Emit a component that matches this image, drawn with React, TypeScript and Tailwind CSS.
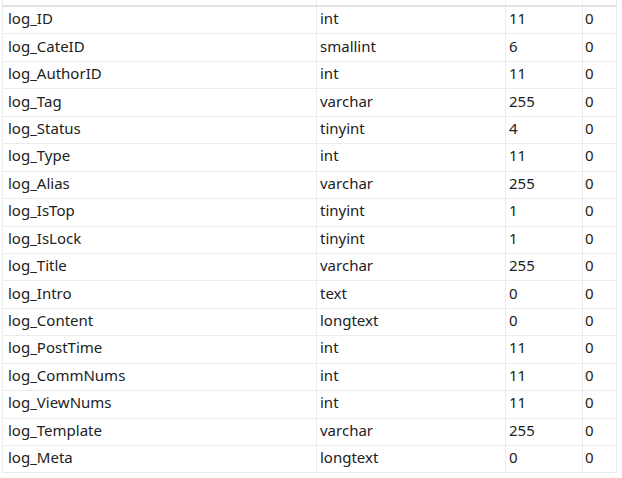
const rows: [string, string, string, string][] = [
  ["log_ID", "int", "11", "0"],
  ["log_CateID", "smallint", "6", "0"],
  ["log_AuthorID", "int", "11", "0"],
  ["log_Tag", "varchar", "255", "0"],
  ["log_Status", "tinyint", "4", "0"],
  ["log_Type", "int", "11", "0"],
  ["log_Alias", "varchar", "255", "0"],
  ["log_IsTop", "tinyint", "1", "0"],
  ["log_IsLock", "tinyint", "1", "0"],
  ["log_Title", "varchar", "255", "0"],
  ["log_Intro", "text", "0", "0"],
  ["log_Content", "longtext", "0", "0"],
  ["log_PostTime", "int", "11", "0"],
  ["log_CommNums", "int", "11", "0"],
  ["log_ViewNums", "int", "11", "0"],
  ["log_Template", "varchar", "255", "0"],
  ["log_Meta", "longtext", "0", "0"],
];

export default function App() {
  return (
    <div
      className="h-[478px] w-[622px] overflow-hidden bg-white text-[15px] text-[#222]"
      style={{ fontFamily: '"Noto Sans", sans-serif' }}
    >
      {/* header row, scrolled mostly out of view */}
      <div className="ml-[2px] h-[7px] w-[615px] border-b-2 border-[#e3e3e3]">
        <div className="grid h-full grid-cols-[315px_189px_77px_34px]">
          <div className="border-x border-[#ececec]" />
          <div className="border-r border-[#ececec]" />
          <div className="border-r border-[#ececec]" />
          <div className="border-r border-[#ececec]" />
        </div>
      </div>
      <div className="ml-[2px] w-[615px]">
        {rows.map(([name, type, len, dec]) => (
          <div
            key={name}
            className="grid h-[27.45px] grid-cols-[315px_189px_77px_34px] border-b border-[#ececec] leading-none"
          >
            <div className="flex items-center border-x border-[#ececec] pb-[3px] pl-[5px]">{name}</div>
            <div className="flex items-center border-r border-[#ececec] pb-[3px] pl-[3px]">{type}</div>
            <div className="flex items-center border-r border-[#ececec] pb-[3px] pl-[3px]">{len}</div>
            <div className="flex items-center border-r border-[#ececec] pb-[3px] pl-[2px]">{dec}</div>
          </div>
        ))}
      </div>
    </div>
  );
}
